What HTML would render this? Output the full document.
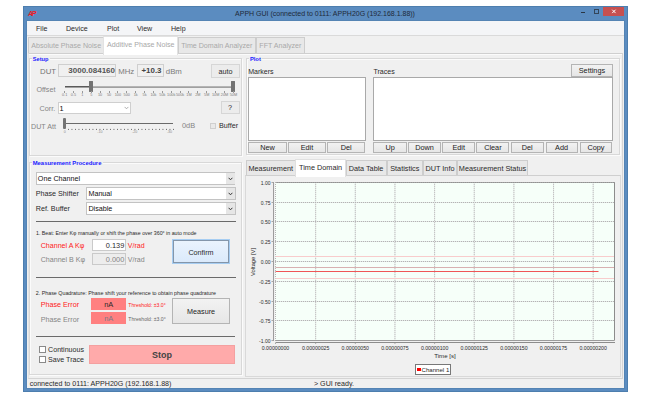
<!DOCTYPE html>
<html><head><meta charset="utf-8">
<style>
*{margin:0;padding:0;box-sizing:border-box}
html,body{width:645px;height:411px;overflow:hidden;background:#fff}
body{position:relative;font-family:"Liberation Sans",sans-serif;font-size:7px;color:#000}
.a{position:absolute}
.t{position:absolute;white-space:nowrap;height:10px;line-height:10px}
</style></head><body>
<div class="a" style="left:23px;top:6px;width:605px;height:386px;background:#5b8cc0;border:1px solid #4d7eae"></div>
<div class="t" style="left:28px;top:8.5px;font-size:7px;font-weight:bold;font-style:italic;color:#ee1c25;letter-spacing:-1.3px">AP</div>
<div class="t" style="left:225px;width:200px;text-align:center;top:8.5px;font-size:7.0px;color:#1e2a38">APPH GUI (connected to 0111: APPH20G (192.168.1.88))</div>
<div class="a" style="left:581.2px;top:12.3px;width:3.8px;height:1.2px;background:#2a3644"></div>
<div class="a" style="left:593.5px;top:9.3px;width:5.4px;height:4.6px;border:1px solid #34455a;border-top-width:1.4px"></div>
<div class="a" style="left:602.7px;top:6.5px;width:21.8px;height:9.5px;background:#c75050"></div>
<svg class="a" style="left:610px;top:8px" width="8" height="7" viewBox="0 0 8 7"><path d="M2.2 1.7 L5.6 5.1 M5.6 1.7 L2.2 5.1" stroke="#fff" stroke-width="1"/></svg>
<div class="a" style="left:26px;top:20px;width:599px;height:369px;border:1px solid #5484b4"></div>
<div class="a" style="left:27px;top:21px;width:597px;height:367px;background:#f0f0f0"></div>
<div class="a" style="left:27px;top:21px;width:597px;height:14.5px;background:#f4f5f7;border-bottom:1px solid #dadada"></div>
<div class="t" style="left:36px;top:23.9px;font-size:7.1px;color:#2a2a2a">File</div>
<div class="t" style="left:66px;top:23.9px;font-size:7.1px;color:#2a2a2a">Device</div>
<div class="t" style="left:107px;top:23.9px;font-size:7.1px;color:#2a2a2a">Plot</div>
<div class="t" style="left:137px;top:23.9px;font-size:7.1px;color:#2a2a2a">View</div>
<div class="t" style="left:171px;top:23.9px;font-size:7.1px;color:#2a2a2a">Help</div>
<div class="a" style="left:27.5px;top:53px;width:595.5px;height:325.6px;border:1px solid #d4d4d4;border-left-color:#e4e4e4;border-top-color:#cfcfcf;background:#f0f0f0"></div>
<div class="a" style="left:28.5px;top:54px;width:593.5px;height:1px;background:#fbfbfb"></div>
<div class="a" style="left:28.2px;top:37.1px;width:76.0px;height:16.1px;border:1px solid #cdcdcd;border-bottom:none;background:#e8e8e8"></div>
<div class="t" style="left:-33.8px;width:200px;text-align:center;top:40.5px;font-size:7.1px;color:#a8a8a8">Absolute Phase Noise</div>
<div class="a" style="left:177.6px;top:37.1px;width:78.4px;height:16.1px;border:1px solid #cdcdcd;border-bottom:none;background:#e8e8e8"></div>
<div class="t" style="left:116.8px;width:200px;text-align:center;top:40.5px;font-size:7.1px;color:#a8a8a8">Time Domain Analyzer</div>
<div class="a" style="left:256px;top:37.1px;width:48.8px;height:16.1px;border:1px solid #cdcdcd;border-bottom:none;background:#e8e8e8"></div>
<div class="t" style="left:180.4px;width:200px;text-align:center;top:40.5px;font-size:7.1px;color:#a8a8a8">FFT Analyzer</div>
<div class="a" style="left:103.3px;top:36px;width:75.0px;height:18.7px;border:1px solid #e2e2e2;border-bottom:none;background:#fff"></div>
<div class="t" style="left:40.8px;width:200px;text-align:center;top:40px;font-size:7.1px;color:#a8a8a8">Additive Phase Noise</div>
<div class="a" style="left:29.9px;top:59.3px;width:213.6px;height:97.6px;border:1px solid #fbfbfb"></div>
<div class="a" style="left:28.9px;top:58.3px;width:213.6px;height:97.6px;border:1px solid #d8d8d8"></div>
<div class="a" style="left:31.5px;top:56px;width:18.0px;height:7px;background:#f0f0f0"></div>
<div class="t" style="left:32.8px;top:54.4px;font-size:5.6px;font-weight:bold;color:#1a1aff">Setup</div>
<div class="t" style="left:40px;top:66.6px;font-size:7.8px;color:#747474">DUT</div>
<div class="a" style="left:57.8px;top:63.9px;width:58.6px;height:13.4px;border:1px solid #cfcfcf"></div>
<div class="t" style="right:530px;top:66.2px;font-size:8px;font-weight:bold;color:#555">3000.084160</div>
<div class="t" style="left:118.2px;top:66.6px;font-size:7.8px;color:#7a7a7a">MHz</div>
<div class="a" style="left:136.5px;top:64px;width:27.1px;height:13px;border:1px solid #cfcfcf"></div>
<div class="t" style="left:51.5px;width:200px;text-align:center;top:66.3px;font-size:7.9px;font-weight:bold;color:#444">+10.3</div>
<div class="t" style="left:165.8px;top:66.6px;font-size:7.8px;color:#7a7a7a">dBm</div>
<div class="a" style="left:211.4px;top:64px;width:28.2px;height:13.8px;border:1px solid #d6d6d6;background:#ececec"></div>
<div class="t" style="left:125.5px;width:200px;text-align:center;top:66.5px;font-size:7.2px;color:#2a2a2a">auto</div>
<div class="t" style="left:36.4px;top:84.9px;font-size:7.2px;color:#858585">Offset</div>
<div class="a" style="left:64.6px;top:86px;width:168.4px;height:1.5px;background:#a0a0a0"></div>
<div class="a" style="left:89px;top:81px;width:3.6px;height:11px;background:#6e6e6e;border-radius:1px"></div>
<div class="a" style="left:231px;top:81px;width:4px;height:11.3px;background:#6e6e6e;border-radius:1px"></div>
<div class="a" style="left:64.6px;top:85.8px;width:24.4px;height:1.4px;background:#5a5a5a"></div>
<div class="a" style="left:64.6px;top:85.8px;width:168.4px;height:1.4px;background:#b4b4b4"></div>
<div class="a" style="left:64.6px;top:85.8px;width:24.4px;height:1.4px;background:#5a5a5a"></div>
<div class="a" style="left:88.9px;top:81.1px;width:4.1px;height:11.2px;background:#737373;border-radius:1px"></div>
<div class="a" style="left:231px;top:81px;width:4px;height:11.3px;background:#737373;border-radius:1px"></div>
<div class="t" style="left:-35.4px;width:200px;text-align:center;top:90.3px;font-size:3.8px;color:#7a7a7a">0.1</div>
<div class="a" style="left:64.1px;top:91.2px;width:1.0px;height:1.4px;background:#999"></div>
<div class="t" style="left:-26.52px;width:200px;text-align:center;top:90.3px;font-size:3.8px;color:#7a7a7a">0.5</div>
<div class="a" style="left:72.98421052631579px;top:91.2px;width:1.0px;height:1.4px;background:#999"></div>
<div class="t" style="left:-17.63px;width:200px;text-align:center;top:90.3px;font-size:3.8px;color:#7a7a7a">1</div>
<div class="a" style="left:81.86842105263158px;top:91.2px;width:1.0px;height:1.4px;background:#999"></div>
<div class="t" style="left:-8.75px;width:200px;text-align:center;top:90.3px;font-size:3.8px;color:#7a7a7a">5</div>
<div class="a" style="left:90.75263157894736px;top:91.2px;width:1.0px;height:1.4px;background:#999"></div>
<div class="t" style="left:0.14px;width:200px;text-align:center;top:90.3px;font-size:3.8px;color:#7a7a7a">10</div>
<div class="a" style="left:99.63684210526316px;top:91.2px;width:1.0px;height:1.4px;background:#999"></div>
<div class="t" style="left:9.02px;width:200px;text-align:center;top:90.3px;font-size:3.8px;color:#7a7a7a">50</div>
<div class="a" style="left:108.52105263157894px;top:91.2px;width:1.0px;height:1.4px;background:#999"></div>
<div class="t" style="left:17.91px;width:200px;text-align:center;top:90.3px;font-size:3.8px;color:#7a7a7a">100</div>
<div class="a" style="left:117.40526315789474px;top:91.2px;width:1.0px;height:1.4px;background:#999"></div>
<div class="t" style="left:26.79px;width:200px;text-align:center;top:90.3px;font-size:3.8px;color:#7a7a7a">500</div>
<div class="a" style="left:126.28947368421052px;top:91.2px;width:1.0px;height:1.4px;background:#999"></div>
<div class="t" style="left:35.67px;width:200px;text-align:center;top:90.3px;font-size:3.8px;color:#7a7a7a">1k</div>
<div class="a" style="left:135.17368421052632px;top:91.2px;width:1.0px;height:1.4px;background:#999"></div>
<div class="t" style="left:44.56px;width:200px;text-align:center;top:90.3px;font-size:3.8px;color:#7a7a7a">5k</div>
<div class="a" style="left:144.05789473684212px;top:91.2px;width:1.0px;height:1.4px;background:#999"></div>
<div class="t" style="left:53.44px;width:200px;text-align:center;top:90.3px;font-size:3.8px;color:#7a7a7a">10k</div>
<div class="a" style="left:152.94210526315788px;top:91.2px;width:1.0px;height:1.4px;background:#999"></div>
<div class="t" style="left:62.33px;width:200px;text-align:center;top:90.3px;font-size:3.8px;color:#7a7a7a">50k</div>
<div class="a" style="left:161.82631578947368px;top:91.2px;width:1.0px;height:1.4px;background:#999"></div>
<div class="t" style="left:71.21px;width:200px;text-align:center;top:90.3px;font-size:3.8px;color:#7a7a7a">100k</div>
<div class="a" style="left:170.71052631578948px;top:91.2px;width:1.0px;height:1.4px;background:#999"></div>
<div class="t" style="left:80.09px;width:200px;text-align:center;top:90.3px;font-size:3.8px;color:#7a7a7a">500k</div>
<div class="a" style="left:179.59473684210525px;top:91.2px;width:1.0px;height:1.4px;background:#999"></div>
<div class="t" style="left:88.98px;width:200px;text-align:center;top:90.3px;font-size:3.8px;color:#7a7a7a">1M</div>
<div class="a" style="left:188.47894736842107px;top:91.2px;width:1.0px;height:1.4px;background:#999"></div>
<div class="t" style="left:97.86px;width:200px;text-align:center;top:90.3px;font-size:3.8px;color:#7a7a7a">2M</div>
<div class="a" style="left:197.36315789473684px;top:91.2px;width:1.0px;height:1.4px;background:#999"></div>
<div class="t" style="left:106.75px;width:200px;text-align:center;top:90.3px;font-size:3.8px;color:#7a7a7a">5M</div>
<div class="a" style="left:206.24736842105264px;top:91.2px;width:1.0px;height:1.4px;background:#999"></div>
<div class="t" style="left:115.63px;width:200px;text-align:center;top:90.3px;font-size:3.8px;color:#7a7a7a">10M</div>
<div class="a" style="left:215.13157894736844px;top:91.2px;width:1.0px;height:1.4px;background:#999"></div>
<div class="t" style="left:124.52px;width:200px;text-align:center;top:90.3px;font-size:3.8px;color:#7a7a7a">20M</div>
<div class="a" style="left:224.0157894736842px;top:91.2px;width:1.0px;height:1.4px;background:#999"></div>
<div class="t" style="left:133.4px;width:200px;text-align:center;top:90.3px;font-size:3.8px;color:#7a7a7a">50M</div>
<div class="a" style="left:232.9px;top:91.2px;width:1.0px;height:1.4px;background:#999"></div>
<div class="t" style="left:39.5px;top:103.8px;font-size:7.3px;color:#858585">Corr.</div>
<div class="a" style="left:57.8px;top:101.5px;width:72.9px;height:12.7px;border:1px solid #cfcfcf;background:#fff"></div>
<div class="t" style="left:59.5px;top:104px;font-size:7.3px;color:#111">1</div>
<svg class="a" style="left:123.5px;top:106px" width="5" height="4" viewBox="0 0 5 4"><path d="M0.6 0.9 L2.5 2.8 L4.4 0.9" fill="none" stroke="#9a9a9a" stroke-width="0.8"/></svg>
<div class="a" style="left:220.8px;top:101px;width:19.1px;height:13.4px;border:1px solid #d6d6d6;background:#ececec"></div>
<div class="t" style="left:130px;width:200px;text-align:center;top:102.6px;font-size:7.3px;color:#2a2a2a">?</div>
<div class="t" style="left:31px;top:121.5px;font-size:7.15px;color:#858585">DUT Att</div>
<div class="a" style="left:63px;top:122.5px;width:110px;height:1.3px;background:#6a6a6a"></div>
<div class="a" style="left:62.7px;top:117.6px;width:3.8px;height:11.5px;background:#737373;border-radius:1px"></div>
<svg class="a" style="left:0;top:0" width="645" height="411"><line x1="68" y1="129.4" x2="175" y2="129.4" stroke="#444" stroke-width="0.9" stroke-dasharray="0.9 2.6"/></svg>
<div class="t" style="left:-35.3px;width:200px;text-align:center;top:126.8px;font-size:3.6px;color:#8a8a8a">0</div>
<div class="t" style="left:-0.2px;width:200px;text-align:center;top:126.8px;font-size:3.6px;color:#8a8a8a">-10</div>
<div class="t" style="left:34.6px;width:200px;text-align:center;top:126.8px;font-size:3.6px;color:#8a8a8a">-20</div>
<div class="t" style="left:69.5px;width:200px;text-align:center;top:126.8px;font-size:3.6px;color:#8a8a8a">-30</div>
<div class="t" style="left:182px;top:121.1px;font-size:7.4px;color:#858585">0dB</div>
<div class="a" style="left:210.4px;top:122.5px;width:6.1px;height:6.1px;border:1px solid #cfcfcf;background:#e9e9e9"></div>
<div class="t" style="left:219px;top:121.1px;font-size:7.2px;color:#2a2a2a">Buffer</div>
<div class="a" style="left:29.9px;top:163px;width:213.6px;height:213px;border:1px solid #fbfbfb"></div>
<div class="a" style="left:28.9px;top:162px;width:213.6px;height:213px;border:1px solid #d8d8d8"></div>
<div class="a" style="left:31.5px;top:159px;width:71.0px;height:7px;background:#f0f0f0"></div>
<div class="t" style="left:32.7px;top:158px;font-size:5.9px;font-weight:bold;color:#1a1aff">Measurement Procedure</div>
<div class="a" style="left:35.6px;top:172.3px;width:199.9px;height:12.9px;border:1px solid #c3c3c3;background:#fff"></div>
<div class="a" style="left:226px;top:173.3px;width:8.5px;height:10.9px;background:#e6e6e6"></div>
<div class="t" style="left:37.8px;top:174.25px;font-size:7.2px;color:#111">One Channel</div>
<svg class="a" style="left:228.3px;top:176.75px" width="5" height="4" viewBox="0 0 5 4"><path d="M0.6 0.8 L2.5 2.8 L4.4 0.8" fill="none" stroke="#333" stroke-width="1"/></svg>
<div class="t" style="left:35.7px;top:188.8px;font-size:7.2px;color:#2a2a2a">Phase Shifter</div>
<div class="a" style="left:86px;top:187.3px;width:149.5px;height:12.4px;border:1px solid #c3c3c3;background:#fff"></div>
<div class="a" style="left:226px;top:188.3px;width:8.5px;height:10.4px;background:#e6e6e6"></div>
<div class="t" style="left:88.4px;top:189.0px;font-size:7.2px;color:#111">Manual</div>
<svg class="a" style="left:228.3px;top:191.5px" width="5" height="4" viewBox="0 0 5 4"><path d="M0.6 0.8 L2.5 2.8 L4.4 0.8" fill="none" stroke="#333" stroke-width="1"/></svg>
<div class="t" style="left:35.7px;top:203.5px;font-size:7.2px;color:#2a2a2a">Ref. Buffer</div>
<div class="a" style="left:86px;top:202.3px;width:149.5px;height:12.6px;border:1px solid #c3c3c3;background:#fff"></div>
<div class="a" style="left:226px;top:203.3px;width:8.5px;height:10.6px;background:#e6e6e6"></div>
<div class="t" style="left:88.4px;top:204.1px;font-size:7.2px;color:#111">Disable</div>
<svg class="a" style="left:228.3px;top:206.6px" width="5" height="4" viewBox="0 0 5 4"><path d="M0.6 0.8 L2.5 2.8 L4.4 0.8" fill="none" stroke="#333" stroke-width="1"/></svg>
<div class="a" style="left:35.6px;top:220.5px;width:200.1px;height:1.1px;background:#6a6a6a"></div>
<div class="t" style="left:36px;top:228.3px;font-size:5.25px;color:#2a2a2a">1. Beat: Enter Kφ manually or shift the phase over 360° in auto mode</div>
<div class="t" style="left:40.7px;top:240.6px;font-size:7.1px;color:#ff2020">Channel A Kφ</div>
<div class="a" style="left:91.5px;top:239.1px;width:34.1px;height:11.6px;border:1px solid #cacaca;background:#fff"></div>
<div class="t" style="right:520.7px;top:240.8px;font-size:7.4px;color:#2a2a2a">0.139</div>
<div class="t" style="left:127.8px;top:240.6px;font-size:7.0px;color:#ff2020">V/rad</div>
<div class="t" style="left:40.7px;top:254.6px;font-size:7.1px;color:#858585">Channel B Kφ</div>
<div class="a" style="left:91.5px;top:253.3px;width:34.1px;height:11.4px;border:1px solid #cacaca;background:#ededed"></div>
<div class="t" style="right:520.7px;top:254.8px;font-size:7.4px;color:#858585">0.000</div>
<div class="t" style="left:127.8px;top:254.6px;font-size:7.0px;color:#858585">V/rad</div>
<div class="a" style="left:172.4px;top:239.3px;width:57.2px;height:25.0px;border:1px solid #a6cdf2;background:#a6cdf2"></div>
<div class="a" style="left:173.4px;top:240.3px;width:55.2px;height:23.0px;border:1px solid #8496aa;background:linear-gradient(#eaf3fd,#dbeafb)"></div>
<div class="t" style="left:101px;width:200px;text-align:center;top:247.6px;font-size:7.2px;color:#2a2a2a">Confirm</div>
<div class="a" style="left:35.6px;top:277px;width:200.1px;height:1.1px;background:#6a6a6a"></div>
<div class="t" style="left:35.7px;top:287.6px;font-size:5.35px;color:#2a2a2a">2. Phase Quadrature: Phase shift your reference to obtain phase quadrature</div>
<div class="t" style="left:40.7px;top:299.8px;font-size:7.2px;color:#ff2020">Phase Error</div>
<div class="a" style="left:91.2px;top:298px;width:34.8px;height:12px;background:#ff8080"></div>
<div class="t" style="left:8.7px;width:200px;text-align:center;top:300.2px;font-size:7.4px;color:#2a2a2a">nA</div>
<div class="t" style="left:40.7px;top:314.5px;font-size:7.2px;color:#858585">Phase Error</div>
<div class="a" style="left:91.2px;top:312px;width:34.8px;height:12.2px;background:#ff8080"></div>
<div class="t" style="left:8.7px;width:200px;text-align:center;top:314.3px;font-size:7.4px;color:#7a7a88">nA</div>
<div class="t" style="left:128.3px;top:300px;font-size:5.1px;color:#ff2020">Threshold: ±3.0°</div>
<div class="t" style="left:128.3px;top:314.1px;font-size:5.1px;color:#666">Threshold: ±3.0°</div>
<div class="a" style="left:172.4px;top:298.3px;width:57.3px;height:25.4px;border:1px solid #b4b4b4;background:linear-gradient(#f2f2f2,#e6e6e6);"></div>
<div class="t" style="left:101.05px;width:200px;text-align:center;top:306.7px;font-size:7.2px;color:#222">Measure</div>
<div class="a" style="left:36.2px;top:336px;width:198.8px;height:1.1px;background:#6a6a6a"></div>
<div class="a" style="left:39.3px;top:346.2px;width:6.5px;height:6.6px;border:1px solid #8a8a8a;background:#fff"></div>
<div class="t" style="left:48.1px;top:345.2px;font-size:7.1px;color:#2a2a2a">Continuous</div>
<div class="a" style="left:39.3px;top:356.2px;width:6.5px;height:6.6px;border:1px solid #8a8a8a;background:#fff"></div>
<div class="t" style="left:48.1px;top:355.1px;font-size:7.1px;color:#2a2a2a">Save Trace</div>
<div class="a" style="left:88.7px;top:344.7px;width:146.3px;height:18.9px;background:#ffaaaa;border:1px solid #f4a0a0"></div>
<div class="t" style="left:62px;width:200px;text-align:center;top:349.7px;font-size:9.0px;font-weight:bold;color:#444">Stop</div>
<div class="a" style="left:246.8px;top:59.3px;width:373.8px;height:96.7px;border:1px solid #fbfbfb"></div>
<div class="a" style="left:245.8px;top:58.3px;width:373.8px;height:96.7px;border:1px solid #d8d8d8"></div>
<div class="a" style="left:248.5px;top:56px;width:13.5px;height:7px;background:#f0f0f0"></div>
<div class="t" style="left:249.9px;top:54.4px;font-size:5.8px;font-weight:bold;color:#1a1aff">Plot</div>
<div class="t" style="left:248.2px;top:66.8px;font-size:7.05px;color:#2a2a2a">Markers</div>
<div class="a" style="left:248.3px;top:77.3px;width:117.5px;height:64.2px;border:1px solid #a9a9a9;background:#fff"></div>
<div class="a" style="left:248.3px;top:141.5px;width:38.5px;height:11.3px;border:1px solid #b4b4b4;background:linear-gradient(#f2f2f2,#e6e6e6);"></div>
<div class="t" style="left:167.55px;width:200px;text-align:center;top:142.85px;font-size:7.3px;color:#222">New</div>
<div class="a" style="left:288.2px;top:141.5px;width:37.5px;height:11.3px;border:1px solid #b4b4b4;background:linear-gradient(#f2f2f2,#e6e6e6);"></div>
<div class="t" style="left:206.95px;width:200px;text-align:center;top:142.85px;font-size:7.3px;color:#222">Edit</div>
<div class="a" style="left:327.3px;top:141.5px;width:37.7px;height:11.3px;border:1px solid #b4b4b4;background:linear-gradient(#f2f2f2,#e6e6e6);"></div>
<div class="t" style="left:246.15px;width:200px;text-align:center;top:142.85px;font-size:7.3px;color:#222">Del</div>
<div class="t" style="left:373.4px;top:66.8px;font-size:7.05px;color:#2a2a2a">Traces</div>
<div class="a" style="left:373.1px;top:77.3px;width:239.6px;height:64.2px;border:1px solid #a9a9a9;background:#fff"></div>
<div class="a" style="left:571.3px;top:63.9px;width:41.3px;height:13.1px;border:1px solid #b4b4b4;background:linear-gradient(#f2f2f2,#e6e6e6);"></div>
<div class="t" style="left:491.95px;width:200px;text-align:center;top:66.15px;font-size:7.3px;color:#222">Settings</div>
<div class="a" style="left:373.4px;top:141.5px;width:33.4px;height:11.3px;border:1px solid #b4b4b4;background:linear-gradient(#f2f2f2,#e6e6e6);"></div>
<div class="t" style="left:290.1px;width:200px;text-align:center;top:142.85px;font-size:7.3px;color:#222">Up</div>
<div class="a" style="left:408.2px;top:141.5px;width:32.6px;height:11.3px;border:1px solid #b4b4b4;background:linear-gradient(#f2f2f2,#e6e6e6);"></div>
<div class="t" style="left:324.5px;width:200px;text-align:center;top:142.85px;font-size:7.3px;color:#222">Down</div>
<div class="a" style="left:442.4px;top:141.5px;width:32.6px;height:11.3px;border:1px solid #b4b4b4;background:linear-gradient(#f2f2f2,#e6e6e6);"></div>
<div class="t" style="left:358.7px;width:200px;text-align:center;top:142.85px;font-size:7.3px;color:#222">Edit</div>
<div class="a" style="left:476.4px;top:141.5px;width:32.9px;height:11.3px;border:1px solid #b4b4b4;background:linear-gradient(#f2f2f2,#e6e6e6);"></div>
<div class="t" style="left:392.85px;width:200px;text-align:center;top:142.85px;font-size:7.3px;color:#222">Clear</div>
<div class="a" style="left:510.7px;top:141.5px;width:32.9px;height:11.3px;border:1px solid #b4b4b4;background:linear-gradient(#f2f2f2,#e6e6e6);"></div>
<div class="t" style="left:427.15px;width:200px;text-align:center;top:142.85px;font-size:7.3px;color:#222">Del</div>
<div class="a" style="left:545.5px;top:141.5px;width:32.1px;height:11.3px;border:1px solid #b4b4b4;background:linear-gradient(#f2f2f2,#e6e6e6);"></div>
<div class="t" style="left:461.55px;width:200px;text-align:center;top:142.85px;font-size:7.3px;color:#222">Add</div>
<div class="a" style="left:579.5px;top:141.5px;width:32.9px;height:11.3px;border:1px solid #b4b4b4;background:linear-gradient(#f2f2f2,#e6e6e6);"></div>
<div class="t" style="left:495.95px;width:200px;text-align:center;top:142.85px;font-size:7.3px;color:#222">Copy</div>
<div class="a" style="left:245px;top:175px;width:376px;height:202px;border:1px solid #d9d9d9;border-top-color:#cfcfcf;background:#f0f0f0"></div>
<div class="a" style="left:245.8px;top:159.9px;width:50.0px;height:15.5px;border:1px solid #cdcdcd;border-bottom:none;background:#e8e8e8"></div>
<div class="t" style="left:170.8px;width:200px;text-align:center;top:163.8px;font-size:7.3px;color:#2a2a2a">Measurement</div>
<div class="a" style="left:345.5px;top:159.9px;width:41.1px;height:15.5px;border:1px solid #cdcdcd;border-bottom:none;background:#e8e8e8"></div>
<div class="t" style="left:266.05px;width:200px;text-align:center;top:163.8px;font-size:7.3px;color:#2a2a2a">Data Table</div>
<div class="a" style="left:386.6px;top:159.9px;width:36.4px;height:15.5px;border:1px solid #cdcdcd;border-bottom:none;background:#e8e8e8"></div>
<div class="t" style="left:304.8px;width:200px;text-align:center;top:163.8px;font-size:7.3px;color:#2a2a2a">Statistics</div>
<div class="a" style="left:423px;top:159.9px;width:34px;height:15.5px;border:1px solid #cdcdcd;border-bottom:none;background:#e8e8e8"></div>
<div class="t" style="left:340.0px;width:200px;text-align:center;top:163.8px;font-size:7.3px;color:#2a2a2a">DUT Info</div>
<div class="a" style="left:457px;top:159.9px;width:71px;height:15.5px;border:1px solid #cdcdcd;border-bottom:none;background:#e8e8e8"></div>
<div class="t" style="left:392.5px;width:200px;text-align:center;top:163.8px;font-size:7.3px;color:#2a2a2a">Measurement Status</div>
<div class="a" style="left:295.3px;top:158.7px;width:50.7px;height:17.9px;border:1px solid #e0e0e0;border-bottom:none;background:#fff"></div>
<div class="t" style="left:220.6px;width:200px;text-align:center;top:162.5px;font-size:7.3px;color:#2a2a2a">Time Domain</div>
<div class="t" style="left:29.7px;top:378.5px;font-size:7.1px;color:#2a2a2a">connected to 0111: APPH20G (192.168.1.88)</div>
<div class="t" style="left:314px;top:379.1px;font-size:7.1px;color:#2a2a2a">&gt; GUI ready.</div>
<svg class="a" style="left:0;top:0" width="645" height="411" viewBox="0 0 645 411"><rect x="275" y="182" width="340" height="159" fill="#f6fff9"/><line x1="315.65" y1="182" x2="315.65" y2="341" stroke="#e2e6e4" stroke-width="1"/><line x1="315.65" y1="182" x2="315.65" y2="341" stroke="#c2c2c2" stroke-width="1" stroke-dasharray="1 1"/><line x1="355.3" y1="182" x2="355.3" y2="341" stroke="#e2e6e4" stroke-width="1"/><line x1="355.3" y1="182" x2="355.3" y2="341" stroke="#c2c2c2" stroke-width="1" stroke-dasharray="1 1"/><line x1="394.95" y1="182" x2="394.95" y2="341" stroke="#e2e6e4" stroke-width="1"/><line x1="394.95" y1="182" x2="394.95" y2="341" stroke="#c2c2c2" stroke-width="1" stroke-dasharray="1 1"/><line x1="434.6" y1="182" x2="434.6" y2="341" stroke="#e2e6e4" stroke-width="1"/><line x1="434.6" y1="182" x2="434.6" y2="341" stroke="#c2c2c2" stroke-width="1" stroke-dasharray="1 1"/><line x1="474.25" y1="182" x2="474.25" y2="341" stroke="#e2e6e4" stroke-width="1"/><line x1="474.25" y1="182" x2="474.25" y2="341" stroke="#c2c2c2" stroke-width="1" stroke-dasharray="1 1"/><line x1="513.9" y1="182" x2="513.9" y2="341" stroke="#e2e6e4" stroke-width="1"/><line x1="513.9" y1="182" x2="513.9" y2="341" stroke="#c2c2c2" stroke-width="1" stroke-dasharray="1 1"/><line x1="553.55" y1="182" x2="553.55" y2="341" stroke="#e2e6e4" stroke-width="1"/><line x1="553.55" y1="182" x2="553.55" y2="341" stroke="#c2c2c2" stroke-width="1" stroke-dasharray="1 1"/><line x1="593.2" y1="182" x2="593.2" y2="341" stroke="#e2e6e4" stroke-width="1"/><line x1="593.2" y1="182" x2="593.2" y2="341" stroke="#c2c2c2" stroke-width="1" stroke-dasharray="1 1"/><line x1="275" y1="202.5" x2="615" y2="202.5" stroke="#e2e6e4" stroke-width="1"/><line x1="275" y1="202.5" x2="615" y2="202.5" stroke="#b4b4b4" stroke-width="1" stroke-dasharray="1 1"/><line x1="275" y1="221.5" x2="615" y2="221.5" stroke="#e2e6e4" stroke-width="1"/><line x1="275" y1="221.5" x2="615" y2="221.5" stroke="#b4b4b4" stroke-width="1" stroke-dasharray="1 1"/><line x1="275" y1="241.5" x2="615" y2="241.5" stroke="#e2e6e4" stroke-width="1"/><line x1="275" y1="241.5" x2="615" y2="241.5" stroke="#b4b4b4" stroke-width="1" stroke-dasharray="1 1"/><line x1="275" y1="261.5" x2="615" y2="261.5" stroke="#e2e6e4" stroke-width="1"/><line x1="275" y1="261.5" x2="615" y2="261.5" stroke="#b4b4b4" stroke-width="1" stroke-dasharray="1 1"/><line x1="275" y1="281.5" x2="615" y2="281.5" stroke="#e2e6e4" stroke-width="1"/><line x1="275" y1="281.5" x2="615" y2="281.5" stroke="#b4b4b4" stroke-width="1" stroke-dasharray="1 1"/><line x1="275" y1="301.5" x2="615" y2="301.5" stroke="#e2e6e4" stroke-width="1"/><line x1="275" y1="301.5" x2="615" y2="301.5" stroke="#b4b4b4" stroke-width="1" stroke-dasharray="1 1"/><line x1="275" y1="320.5" x2="615" y2="320.5" stroke="#e2e6e4" stroke-width="1"/><line x1="275" y1="320.5" x2="615" y2="320.5" stroke="#b4b4b4" stroke-width="1" stroke-dasharray="1 1"/><line x1="275" y1="182.5" x2="615" y2="182.5" stroke="#a4a4a4" stroke-width="1"/><line x1="275" y1="182.5" x2="615" y2="182.5" stroke="#929292" stroke-width="1" stroke-dasharray="1 1"/><line x1="275.5" y1="182" x2="275.5" y2="341" stroke="#b4b4b4" stroke-width="1" stroke-dasharray="1 1"/><line x1="275.5" y1="256.5" x2="614.5" y2="256.5" stroke="#f8cccc" stroke-width="1"/><line x1="275.5" y1="267.5" x2="614.5" y2="267.5" stroke="#d8b0b0" stroke-width="1"/><line x1="275.5" y1="278.5" x2="614.5" y2="278.5" stroke="#f8cccc" stroke-width="1"/><line x1="275.5" y1="271.5" x2="598.5" y2="271.5" stroke="#ef5555" stroke-width="1"/><line x1="614.5" y1="182.5" x2="614.5" y2="340.5" stroke="#8c8c8c" stroke-width="1"/><line x1="275.5" y1="340.5" x2="614.5" y2="340.5" stroke="#9c9c9c" stroke-width="1"/><line x1="273.5" y1="182" x2="273.5" y2="341" stroke="#9c9c9c" stroke-width="1"/><line x1="275.5" y1="342.5" x2="615" y2="342.5" stroke="#8c8c8c" stroke-width="1"/><line x1="271.5" y1="182.5" x2="273" y2="182.5" stroke="#aaa" stroke-width="1"/><line x1="271.5" y1="202.5" x2="273" y2="202.5" stroke="#aaa" stroke-width="1"/><line x1="271.5" y1="221.5" x2="273" y2="221.5" stroke="#aaa" stroke-width="1"/><line x1="271.5" y1="241.5" x2="273" y2="241.5" stroke="#aaa" stroke-width="1"/><line x1="271.5" y1="261.5" x2="273" y2="261.5" stroke="#aaa" stroke-width="1"/><line x1="271.5" y1="281.5" x2="273" y2="281.5" stroke="#aaa" stroke-width="1"/><line x1="271.5" y1="301.5" x2="273" y2="301.5" stroke="#aaa" stroke-width="1"/><line x1="271.5" y1="320.5" x2="273" y2="320.5" stroke="#aaa" stroke-width="1"/><line x1="271.5" y1="340.5" x2="273" y2="340.5" stroke="#aaa" stroke-width="1"/><line x1="275.5" y1="343" x2="275.5" y2="344" stroke="#aaa" stroke-width="1"/><line x1="315.65" y1="343" x2="315.65" y2="344" stroke="#aaa" stroke-width="1"/><line x1="355.3" y1="343" x2="355.3" y2="344" stroke="#aaa" stroke-width="1"/><line x1="394.95" y1="343" x2="394.95" y2="344" stroke="#aaa" stroke-width="1"/><line x1="434.6" y1="343" x2="434.6" y2="344" stroke="#aaa" stroke-width="1"/><line x1="474.25" y1="343" x2="474.25" y2="344" stroke="#aaa" stroke-width="1"/><line x1="513.9" y1="343" x2="513.9" y2="344" stroke="#aaa" stroke-width="1"/><line x1="553.55" y1="343" x2="553.55" y2="344" stroke="#aaa" stroke-width="1"/><line x1="593.2" y1="343" x2="593.2" y2="344" stroke="#aaa" stroke-width="1"/></svg>
<div class="t" style="right:374.5px;top:177.5px;font-size:5.0px;color:#2a2a2a">1.00</div>
<div class="t" style="right:374.5px;top:197.5px;font-size:5.0px;color:#2a2a2a">0.75</div>
<div class="t" style="right:374.5px;top:216.5px;font-size:5.0px;color:#2a2a2a">0.50</div>
<div class="t" style="right:374.5px;top:236.5px;font-size:5.0px;color:#2a2a2a">0.25</div>
<div class="t" style="right:374.5px;top:256.5px;font-size:5.0px;color:#2a2a2a">0.00</div>
<div class="t" style="right:374.5px;top:276.5px;font-size:5.0px;color:#2a2a2a">-0.25</div>
<div class="t" style="right:374.5px;top:296.5px;font-size:5.0px;color:#2a2a2a">-0.50</div>
<div class="t" style="right:374.5px;top:315.5px;font-size:5.0px;color:#2a2a2a">-0.75</div>
<div class="t" style="right:374.5px;top:335.5px;font-size:5.0px;color:#2a2a2a">-1.00</div>
<div class="t" style="left:175.5px;width:200px;text-align:center;top:342.8px;font-size:5.2px;color:#2a2a2a">0.00000000</div>
<div class="t" style="left:215.65px;width:200px;text-align:center;top:342.8px;font-size:5.2px;color:#2a2a2a">0.00000025</div>
<div class="t" style="left:255.3px;width:200px;text-align:center;top:342.8px;font-size:5.2px;color:#2a2a2a">0.00000050</div>
<div class="t" style="left:294.95px;width:200px;text-align:center;top:342.8px;font-size:5.2px;color:#2a2a2a">0.00000075</div>
<div class="t" style="left:334.6px;width:200px;text-align:center;top:342.8px;font-size:5.2px;color:#2a2a2a">0.00000100</div>
<div class="t" style="left:374.25px;width:200px;text-align:center;top:342.8px;font-size:5.2px;color:#2a2a2a">0.00000125</div>
<div class="t" style="left:413.9px;width:200px;text-align:center;top:342.8px;font-size:5.2px;color:#2a2a2a">0.00000150</div>
<div class="t" style="left:453.55px;width:200px;text-align:center;top:342.8px;font-size:5.2px;color:#2a2a2a">0.00000175</div>
<div class="t" style="left:493.2px;width:200px;text-align:center;top:342.8px;font-size:5.2px;color:#2a2a2a">0.00000200</div>
<div class="t" style="left:345px;width:200px;text-align:center;top:351px;font-size:6.1px;color:#2a2a2a">Time [s]</div>
<div class="t" style="left:228.3px;top:257px;width:50px;text-align:center;font-size:5.8px;color:#222;transform:rotate(-90deg)">Voltage [V]</div>
<div class="a" style="left:415.3px;top:364.4px;width:35.3px;height:10.3px;border:1px solid #787878;background:#fff"></div>
<div class="a" style="left:417.1px;top:368px;width:3.6px;height:3.1px;background:#f00"></div>
<div class="t" style="left:421.5px;top:364.6px;font-size:6.1px;color:#2a2a2a">Channel 1</div>
</body></html>
